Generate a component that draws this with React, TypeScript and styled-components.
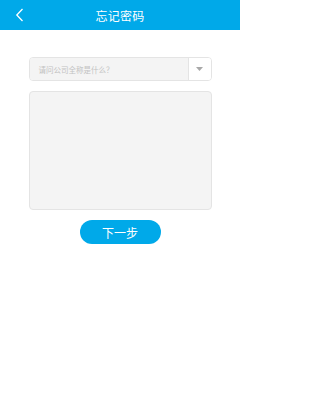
import { FC } from 'react'
import styled, { createGlobalStyle } from 'styled-components'

const GlobalStyle = createGlobalStyle`
  html, body {
    margin: 0;
    padding: 0;
    background: #ffffff;
  }
  body {
    font-family: "Noto Sans CJK SC", "Liberation Sans", sans-serif;
  }
`

const App: FC = () => {
  return (
    <Page>
      <GlobalStyle />
      <Header>
        <BackButton aria-label="back">
          <svg width="9" height="14" viewBox="0 0 9 14">
            <path d="M7.5 1 L1.8 7 L7.5 13" fill="none" stroke="#ffffff" strokeWidth="1.3" />
          </svg>
        </BackButton>
        <Title>忘记密码</Title>
      </Header>
      <Form>
        <Select>
          <SelectText>请问公司全称是什么？</SelectText>
          <SelectArrow>
            <svg width="7" height="4" viewBox="0 0 7 4">
              <path d="M0 0 L7 0 L3.5 4 Z" fill="#a8a8a8" />
            </svg>
          </SelectArrow>
        </Select>
        <Answer />
        <NextButton>下一步</NextButton>
      </Form>
    </Page>
  )
}

export default App

const Page = styled.div`
  width: 240px;
  min-height: 413px;
  background: #ffffff;
`
const Header = styled.header`
  position: relative;
  display: flex;
  align-items: center;
  justify-content: center;
  height: 30px;
  background: #00a9e9;
`
const BackButton = styled.button`
  position: absolute;
  left: 15px;
  top: 8px;
  display: flex;
  padding: 0;
  border: none;
  background: transparent;
`
const Title = styled.h1`
  margin: 0;
  color: #ffffff;
  font-size: 12px;
  font-weight: 400;
  letter-spacing: 0.3px;
`
const Form = styled.div`
  display: flex;
  flex-direction: column;
  align-items: center;
  padding-top: 27px;
`
const Select = styled.div`
  display: flex;
  box-sizing: border-box;
  width: 183px;
  height: 24px;
  border: 1px solid #e4e4e4;
  border-radius: 4px;
  overflow: hidden;
`
const SelectText = styled.div`
  flex: 1;
  display: flex;
  align-items: center;
  padding-left: 9px;
  background: #f4f4f4;
  color: #c2c2c2;
  font-size: 7.5px;
  border-right: 1px solid #e4e4e4;
`
const SelectArrow = styled.div`
  display: flex;
  align-items: center;
  justify-content: center;
  width: 22px;
  background: #ffffff;
`
const Answer = styled.div`
  box-sizing: border-box;
  width: 183px;
  height: 119px;
  margin-top: 10px;
  background: #f4f4f4;
  border: 1px solid #e4e4e4;
  border-radius: 4px;
`
const NextButton = styled.button`
  margin-top: 10px;
  width: 81px;
  height: 24px;
  border: none;
  border-radius: 12px;
  background: #00a9e9;
  color: #ffffff;
  font-family: "Noto Sans CJK SC", "Liberation Sans", sans-serif;
  font-size: 12px;
  padding: 0;
`
